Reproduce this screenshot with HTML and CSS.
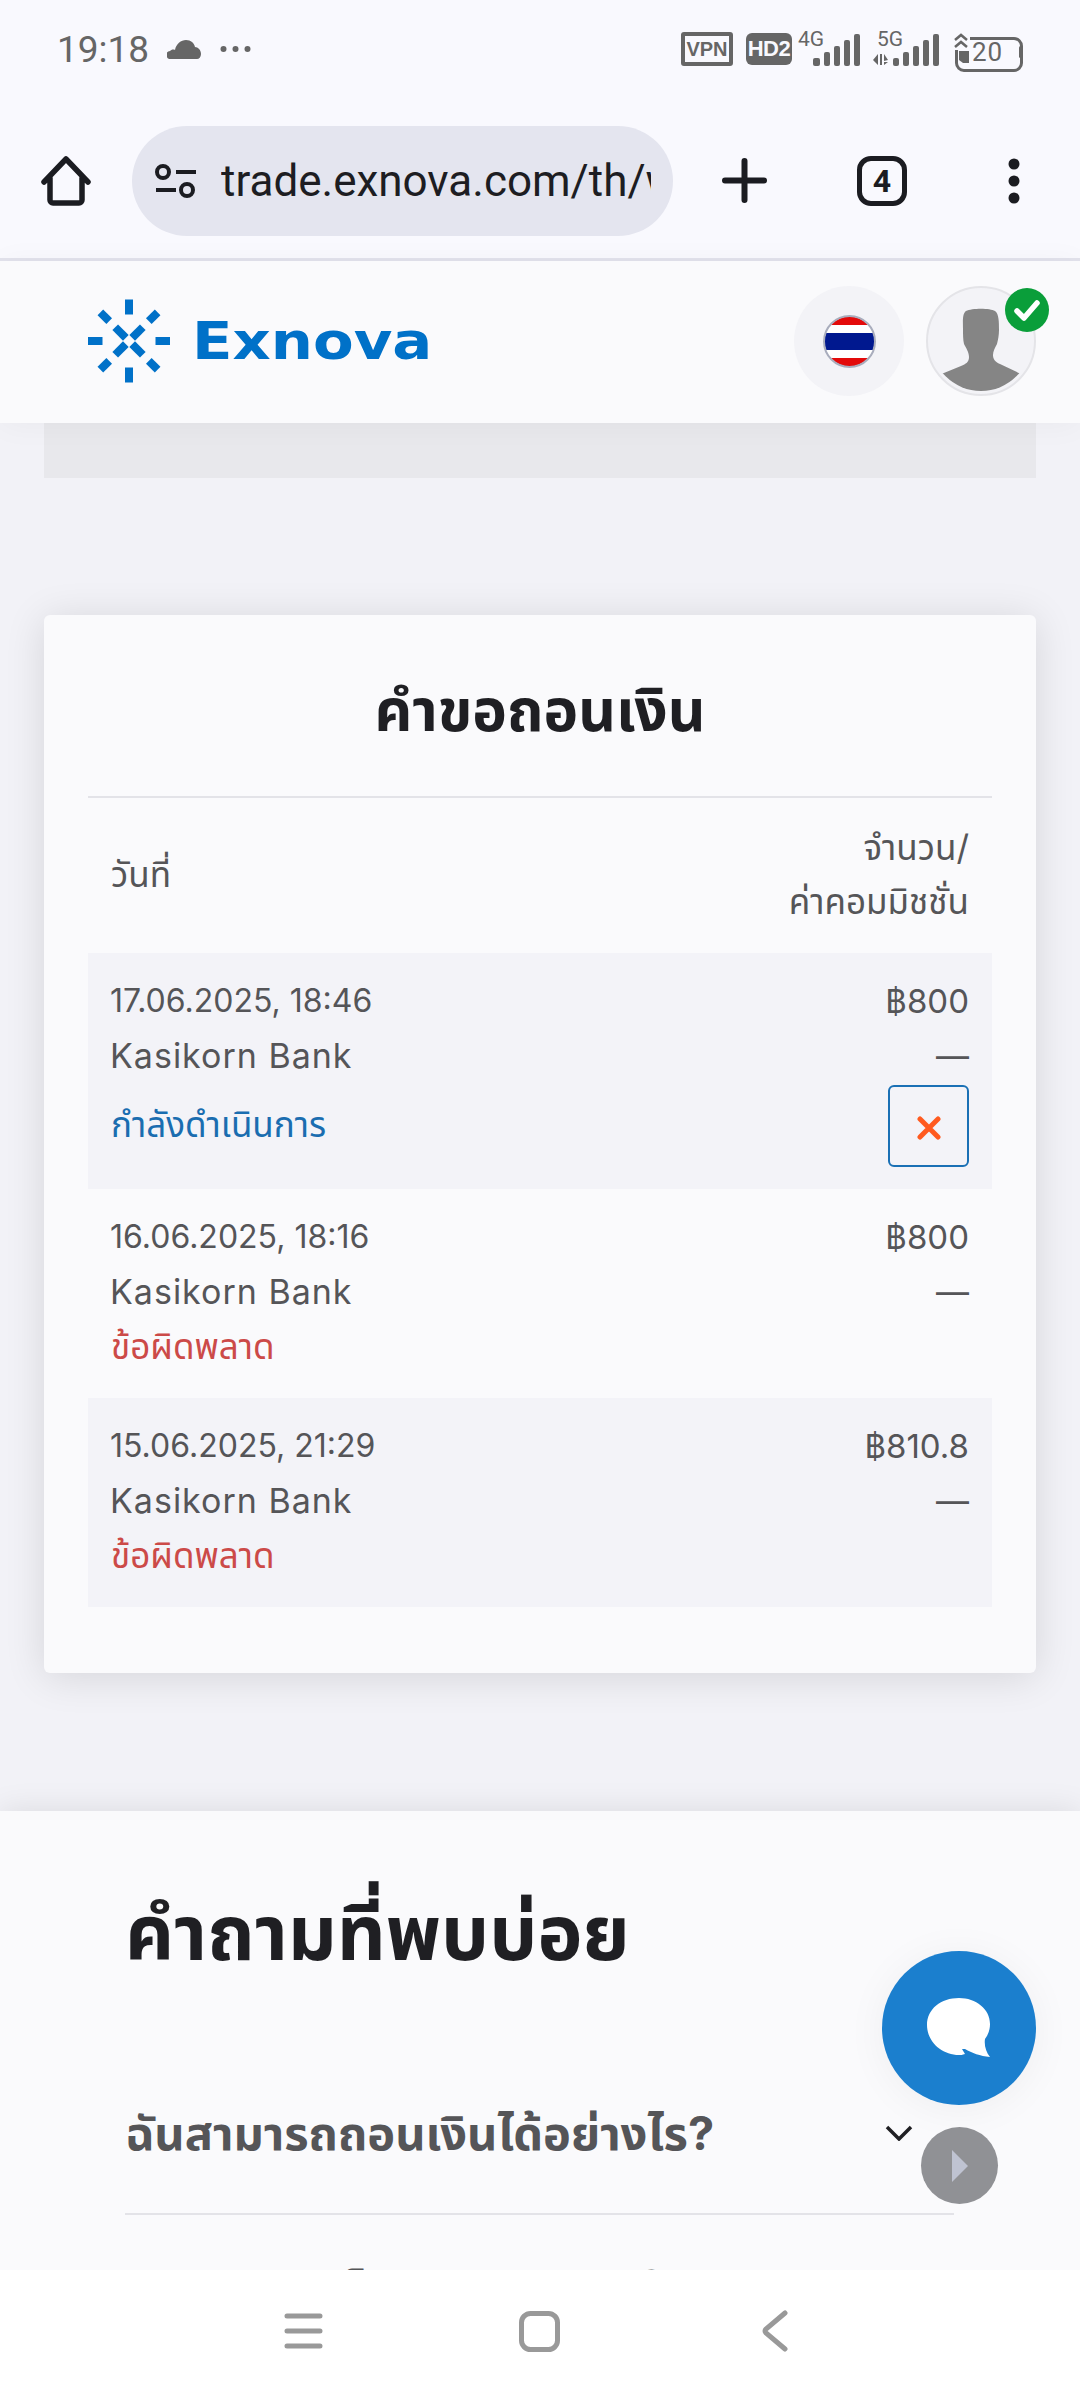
FILE: index.html
```html
<!DOCTYPE html>
<html lang="th">
<head>
    <meta charset="UTF-8">
    <meta name="viewport" content="width=device-width, initial-scale=1.0">
    <title>Exnova</title>
    <link rel="stylesheet" href="styles.css">
</head>
<body>
<div class="screen">
    <div class="status-bar">
        <span class="status-time">19:18</span>
        <svg class="status-cloud" width="34" height="19" viewBox="0 0 34 19"><path d="M4 19a4 4 0 0 1-1-8c1-1 3-2 5-1 1-6 6-10 11-10 5 0 8 3 9 7 3 0 6 3 6 7 0 3-2 5-4 5z" fill="#666"/></svg>
        <svg class="status-dots" width="31" height="8" viewBox="0 0 31 8"><circle cx="3.5" cy="4" r="3" fill="#666"/><circle cx="15.5" cy="4" r="3" fill="#666"/><circle cx="27.5" cy="4" r="3" fill="#666"/></svg>
        <div class="status-right">
            <span class="badge-vpn">VPN</span>
            <span class="badge-hd">HD2</span>
            <div class="signal signal-4g">
                <span class="signal-label">4G</span>
                <svg width="48" height="32" viewBox="0 0 48 32"><g fill="#666"><rect x="0" y="24" width="7" height="8" rx="2"/><rect x="11" y="18" width="6" height="14" rx="2"/><rect x="21" y="12" width="6" height="20" rx="2"/><rect x="31" y="6" width="6" height="26" rx="2"/><rect x="41" y="0" width="6" height="32" rx="2"/></g></svg>
            </div>
            <div class="signal signal-5g">
                <span class="signal-label">5G</span>
                <svg width="67" height="32" viewBox="0 0 67 32"><g fill="#666"><path d="M0 26l5-6v11zM7 20h2v11H7zM11 20l4 6-4 1zM11 28h4l-4 3z"/><rect x="20" y="24" width="6" height="8" rx="2"/><rect x="30" y="18" width="6" height="14" rx="2"/><rect x="40" y="12" width="6" height="20" rx="2"/><rect x="50" y="6" width="6" height="26" rx="2"/><rect x="60" y="0" width="6" height="32" rx="2"/></g></svg>
            </div>
            <div class="battery">
                <svg class="battery-charge" width="16" height="33" viewBox="0 0 16 33"><rect x="0" y="0" width="16" height="17" fill="#f9f9fe"/><path d="M1 7l6-5 6 5M1 14l6-5 6 5" fill="none" stroke="#666" stroke-width="2.500"/><path d="M5 18h10v12H9l-4-3z" fill="#666"/></svg>
                <span class="battery-level">20</span>
                <span class="battery-tip"></span>
            </div>
        </div>
    </div>

    <div class="toolbar">
        <svg class="tool-home" width="50" height="50" viewBox="0 0 50 50"><path d="M3 26L25 3l22 23M9 22v22a3 3 0 0 0 3 3h26a3 3 0 0 0 3-3V22" fill="none" stroke="#1b1c21" stroke-width="5.5" stroke-linecap="round" stroke-linejoin="round"/></svg>
        <div class="address-bar">
            <svg class="site-info" width="42" height="34" viewBox="0 0 42 34"><g fill="none" stroke="#1b1c21" stroke-width="4"><circle cx="8" cy="8" r="6"/><circle cx="32" cy="26" r="6"/></g><rect x="21" y="6" width="20" height="4" fill="#1b1c21"/><rect x="1" y="24" width="20" height="4" fill="#1b1c21"/></svg>
            <span class="address-url">trade.exnova.com/th/withdrawal</span>
        </div>
        <svg class="tool-plus" width="45" height="45" viewBox="0 0 45 45"><path d="M22.5 3v39M3 22.500h39" stroke="#1b1c21" stroke-width="6" stroke-linecap="round"/></svg>
        <div class="tool-tabs">4</div>
        <svg class="tool-menu" width="12" height="46" viewBox="0 0 12 46"><circle cx="6" cy="6" r="5.500" fill="#1b1c21"/><circle cx="6" cy="23" r="5.500" fill="#1b1c21"/><circle cx="6" cy="40" r="5.500" fill="#1b1c21"/></svg>
    </div>

    <header class="site-header">
        <svg class="logo-mark" width="82" height="84" viewBox="-41 -42 82 84">
            <g fill="#0071c8">
                <rect x="-4" y="-41.500" width="8" height="15"/>
                <rect x="-4" y="-41.500" width="8" height="15" transform="rotate(90)"/>
                <rect x="-4" y="-41.500" width="8" height="15" transform="rotate(180)"/>
                <rect x="-4" y="-41.500" width="8" height="15" transform="rotate(270)"/>
                <rect x="-4" y="-40.500" width="8" height="12.500" transform="rotate(45)"/>
                <rect x="-4" y="-40.500" width="8" height="12.500" transform="rotate(135)"/>
                <rect x="-4" y="-40.500" width="8" height="12.500" transform="rotate(225)"/>
                <rect x="-4" y="-40.500" width="8" height="12.500" transform="rotate(315)"/>
                <rect x="-4" y="-19.500" width="8" height="15" transform="rotate(45)"/>
                <rect x="-4" y="-19.500" width="8" height="15" transform="rotate(135)"/>
                <rect x="-4" y="-19.500" width="8" height="15" transform="rotate(225)"/>
                <rect x="-4" y="-19.500" width="8" height="15" transform="rotate(315)"/>
            </g>
        </svg>
        <span class="logo-text">Exnova</span>
        <div class="header-actions">
            <button class="lang-btn">
                <svg width="53" height="53" viewBox="0 0 53 53">
                    <defs><clipPath id="flagClip"><circle cx="26.500" cy="26.500" r="25"/></clipPath></defs>
                    <g clip-path="url(#flagClip)">
                        <rect width="53" height="53" fill="#fff"/>
                        <rect width="53" height="10" fill="#e30a0a"/>
                        <rect y="18" width="53" height="17" fill="#00188f"/>
                        <rect y="43" width="53" height="10" fill="#e30a0a"/>
                    </g>
                    <circle cx="26.500" cy="26.500" r="25.500" fill="none" stroke="#a9adbd" stroke-width="2"/>
                </svg>
            </button>
            <div class="avatar">
                <svg width="102" height="102" viewBox="0 0 102 102">
                    <defs><clipPath id="avatarClip"><circle cx="51" cy="51" r="50"/></clipPath></defs>
                    <path clip-path="url(#avatarClip)" d="M36 21C42 18 60 18 65 21C69 24 69 32 69 40C69 45 68 50 67 54C65 58 63 61 63 65C63 69 65 72 70 74L93 85V102H9V85L31 76C36 74 39 72 39 67C39 62 36 58 34 54C33 50 33 44 33 40C33 32 32 24 36 21Z" fill="#858585"/>
                </svg>
                <span class="avatar-badge">
                    <svg width="26" height="22" viewBox="0 0 26 22"><path d="M3 12l7 7L23 4" fill="none" stroke="#fff" stroke-width="5.500" stroke-linecap="round" stroke-linejoin="round"/></svg>
                </span>
            </div>
        </div>
    </header>

    <main class="page">
        <div class="strip"></div>

        <section class="card">
            <h2 class="card-title">คำขอถอนเงิน</h2>
            <div class="table-head">
                <span>วันที่</span>
                <span class="table-head-right">จำนวน/<br>ค่าคอมมิชชั่น</span>
            </div>

            <div class="row row-shaded">
                <span class="cell-date">17.06.2025, 18:46</span><span class="cell-amount">฿800</span>
                <span class="cell-bank">Kasikorn Bank</span><span class="cell-amount">—</span>
                <span class="state-pending">กำลังดำเนินการ</span>
                <span class="cell-action">
                    <button class="cancel-btn">
                        <svg width="24" height="24" viewBox="0 0 24 24"><path d="M3 3l18 18M21 3L3 21" stroke="#ff5a1f" stroke-width="5" stroke-linecap="round"/></svg>
                    </button>
                </span>
            </div>
            <div class="row">
                <span class="cell-date">16.06.2025, 18:16</span><span class="cell-amount">฿800</span>
                <span class="cell-bank">Kasikorn Bank</span><span class="cell-amount">—</span>
                <span class="state-error">ข้อผิดพลาด</span>
            </div>
            <div class="row row-shaded">
                <span class="cell-date">15.06.2025, 21:29</span><span class="cell-amount">฿810.8</span>
                <span class="cell-bank">Kasikorn Bank</span><span class="cell-amount">—</span>
                <span class="state-error">ข้อผิดพลาด</span>
            </div>
        </section>

        <section class="faq">
            <h2 class="faq-title">คำถามที่พบบ่อย</h2>
            <div class="faq-item">
                <span class="faq-question">ฉันสามารถถอนเงินได้อย่างไร?</span>
                <svg class="faq-chevron" width="28" height="16" viewBox="0 0 28 16"><path d="M2 2l12 12L26 2" fill="none" stroke="#202024" stroke-width="3.500"/></svg>
            </div>
            <div class="faq-item">
                <span class="faq-question">สถานะการเช็คยอดถอนเงินในบัญชี?</span>
            </div>
        </section>
    </main>

    <nav class="nav-bar">
        <svg width="39" height="36" viewBox="0 0 39 36"><path d="M3 3h33M3 18h33M3 33h33" stroke="#999" stroke-width="5" stroke-linecap="round"/></svg>
        <svg class="nav-home" width="41" height="41" viewBox="0 0 41 41"><rect x="2.500" y="2.500" width="36" height="36" rx="9" fill="none" stroke="#999" stroke-width="5"/></svg>
        <svg class="nav-back" width="26" height="42" viewBox="0 0 26 42"><path d="M23 3L4 19a3 3 0 0 0 0 4l19 16" fill="none" stroke="#999" stroke-width="5" stroke-linecap="round"/></svg>
    </nav>

    <button class="chat-fab">
        <svg width="64" height="60" viewBox="0 0 64 60"><path d="M32 0c17 0 31 11 31 26 0 6-2 11-5 15-1 6 1 13 5 18-10-1-18-4-25-8l-3 0 3 5c-3 1-4 1-6 1C15 57 0 44 0 27 0 11 14 0 32 0z" fill="#fff"/></svg>
    </button>
    <button class="play-fab">
        <svg width="16" height="32" viewBox="0 0 16 32"><path d="M0 0l16 16L0 32z" fill="#bfc3d2"/></svg>
    </button>
</div>
</body>
</html>
```

FILE: styles.css
```css
:root {
    --page-bg: #f2f2f7;
    --panel-bg: #fafafc;
    --bar-bg: #f9f9fe;
    --text-color: #555558;
    --dark-color: #1f1f23;
    --line-color: #e3e3e8;
    --shaded-row: #f3f3f8;
    --font-family: Inter, "Noto Sans", "Noto Sans Thai", sans-serif;
}

* {
    box-sizing: border-box;
}

html, body {
    margin: 0;
    height: 100%;
}

body {
    font-family: var(--font-family);
    color: var(--text-color);
    background: var(--page-bg);
}

button {
    border: none;
    padding: 0;
    font: inherit;
}

.screen {
    position: relative;
    display: flex;
    flex-direction: column;
    width: 1080px;
    height: 2400px;
    overflow: hidden;
}

/* Status bar */
.status-bar {
    display: flex;
    align-items: center;
    height: 102px;
    padding: 0 58px 4px 57px;
    background: var(--bar-bg);
    color: #666;
}

.status-time {
    font-family: Roboto, sans-serif;
    font-size: 37px;
}

.status-cloud {
    margin-left: 18px;
}

.status-dots {
    margin-left: 19px;
}

.status-right {
    display: flex;
    align-items: center;
    margin-left: auto;
}

.badge-vpn,
.badge-hd {
    display: flex;
    align-items: center;
    justify-content: center;
    font-family: "Liberation Sans", sans-serif;
    font-weight: 700;
}

.badge-vpn {
    width: 52px;
    height: 34px;
    border: 4px solid #666;
    border-radius: 3px;
    font-size: 20px;
}

.badge-hd {
    width: 46px;
    height: 32px;
    margin-left: 13px;
    border-radius: 6px;
    background: #666;
    color: #f9f9fe;
    font-size: 22px;
    letter-spacing: -0.5px;
}

.signal {
    position: relative;
    display: flex;
    height: 34px;
    align-items: flex-end;
}

.signal-4g {
    width: 63px;
    margin-left: 6px;
    justify-content: flex-end;
}

.signal-5g {
    width: 67px;
    margin-left: 12px;
}

.signal-label {
    position: absolute;
    top: -4px;
    left: 0;
    font-family: Roboto, sans-serif;
    font-size: 21px;
    line-height: 22px;
}

.signal-5g .signal-label {
    left: 4px;
}

.battery {
    position: relative;
    display: flex;
    align-items: center;
    width: 68px;
    height: 33px;
    margin-left: 14px;
}

.battery::before {
    content: "";
    position: absolute;
    top: 4px;
    left: 1px;
    width: 62px;
    height: 29px;
    border: 3px solid #666;
    border-radius: 9px;
}

.battery-charge {
    position: relative;
    flex-shrink: 0;
}

.battery-level {
    position: relative;
    margin: 5px 0 0 2px;
    font-family: Roboto, sans-serif;
    font-size: 26px;
    letter-spacing: 1px;
    line-height: 26px;
}

.battery-tip {
    position: absolute;
    top: 13px;
    right: 0;
    width: 3px;
    height: 12px;
    border-radius: 2px;
    background: #666;
}

/* Browser toolbar */
.toolbar {
    display: flex;
    align-items: center;
    height: 159px;
    padding: 1px 0 0 41px;
    background: var(--bar-bg);
    border-bottom: 3px solid #e2e2ec;
}

.address-bar {
    display: flex;
    align-items: center;
    width: 541px;
    height: 110px;
    margin-left: 41px;
    padding: 0 22px 0 23px;
    border-radius: 55px;
    background: #e4e5ef;
}

.site-info {
    flex-shrink: 0;
}

.address-url {
    flex: 1;
    min-width: 0;
    margin-left: 24px;
    overflow: hidden;
    white-space: nowrap;
    font-family: Roboto, sans-serif;
    font-size: 44px;
    color: #1d1d22;
}

.tool-plus {
    margin-left: 49px;
}

.tool-tabs {
    display: flex;
    align-items: center;
    justify-content: center;
    width: 50px;
    height: 50px;
    margin-left: 90px;
    border: 5px solid #1b1c21;
    border-radius: 14px;
    font-family: Roboto, sans-serif;
    font-size: 32px;
    font-weight: 700;
    color: #1b1c21;
}

.tool-menu {
    margin-left: 101px;
}

/* Site header */
.site-header {
    position: relative;
    z-index: 2;
    display: flex;
    align-items: center;
    height: 162px;
    padding: 0 44px 2px 88px;
    background: var(--panel-bg);
    box-shadow: 0 2px 30px rgba(0, 0, 0, 0.04);
}

.logo-text {
    margin-left: 22px;
    font-family: "DejaVu Sans", sans-serif;
    font-size: 52px;
    font-weight: 700;
    color: #0071c8;
    transform: scaleX(1.14);
    transform-origin: left center;
}

.header-actions {
    display: flex;
    align-items: center;
    gap: 22px;
    margin-left: auto;
}

.lang-btn {
    display: flex;
    align-items: center;
    justify-content: center;
    width: 110px;
    height: 110px;
    border-radius: 50%;
    background: #f3f3f7;
}

.avatar {
    position: relative;
    width: 110px;
    height: 110px;
    padding: 2px;
    border: 2px solid #e4e4e8;
    border-radius: 50%;
    background: #f3f3f7;
}

.avatar-badge {
    position: absolute;
    top: 0;
    right: -15px;
    display: flex;
    align-items: center;
    justify-content: center;
    width: 44px;
    height: 44px;
    border-radius: 50%;
    background: #0a9e3a;
}

/* Page content */
.page {
    flex: 1;
    min-height: 0;
    overflow: hidden;
}

.strip {
    height: 55px;
    margin: 0 44px;
    background: #e8e8ec;
}

.card {
    margin: 137px 44px 138px;
    padding: 0 44px 66px;
    border-radius: 6px;
    background: var(--panel-bg);
    box-shadow: 0 4px 40px rgba(0, 0, 0, 0.12);
}

.card-title {
    height: 183px;
    margin: 0;
    border-bottom: 2px solid var(--line-color);
    font-size: 58.500px;
    font-weight: 700;
    line-height: 190px;
    text-align: center;
    color: var(--dark-color);
}

.table-head {
    display: flex;
    align-items: center;
    justify-content: space-between;
    height: 155px;
    padding: 0 23px 3px;
    font-size: 35px;
    line-height: 54px;
}

.table-head-right {
    text-align: right;
}

.row {
    display: grid;
    grid-template-columns: 1fr auto;
    align-items: center;
    padding: 22px 23px;
    font-size: 35px;
    line-height: 52px;
}

.row-shaded {
    background: var(--shaded-row);
}

.row > span {
    padding-bottom: 3px;
}

.cell-date {
    margin-left: -1px;
    font-size: 32px;
}

.cell-bank {
    margin-left: -1px;
    font-size: 34px;
    letter-spacing: 1px;
}

.cell-amount {
    font-size: 33px;
    text-align: right;
}

.row > .cell-action {
    display: flex;
    justify-content: flex-end;
    padding-bottom: 0;
}

.row > .state-pending,
.row > .state-error {
    padding-bottom: 5px;
    line-height: 50px;
}

.state-pending {
    color: #1a6db0;
}

.state-error {
    color: #cc4a48;
}

.cancel-btn {
    display: flex;
    align-items: center;
    justify-content: center;
    width: 81px;
    height: 82px;
    padding-top: 3px;
    border: 2px solid #1a70b5;
    border-radius: 6px;
    background: transparent;
}

/* FAQ */
.faq {
    height: 600px;
    padding: 71px 0 0 125px;
    background: var(--panel-bg);
    box-shadow: 0 0 30px rgba(0, 0, 0, 0.1);
}

.faq-title {
    margin: 0 0 77px;
    font-size: 76px;
    font-weight: 700;
    line-height: 100px;
    color: var(--dark-color);
}

.faq-item {
    display: flex;
    align-items: center;
    justify-content: space-between;
    width: 829px;
    height: 156px;
    padding: 0 41px 6px 0;
    border-bottom: 2px solid var(--line-color);
}

.faq-item + .faq-item {
    padding-top: 6px;
}

.faq-question {
    padding-top: 5px;
    font-size: 47px;
    font-weight: 700;
}

/* Bottom navigation */
.nav-bar {
    position: relative;
    z-index: 2;
    display: flex;
    align-items: center;
    height: 130px;
    padding: 0 0 8px 284px;
    background: #fff;
}

.nav-home {
    margin-left: 196px;
}

.nav-back {
    margin-left: 202px;
}

/* Floating buttons */
.chat-fab {
    position: absolute;
    top: 1951px;
    right: 44px;
    display: flex;
    align-items: center;
    justify-content: center;
    width: 154px;
    height: 154px;
    border-radius: 50%;
    background: #1b7fce;
    box-shadow: 0 4px 40px rgba(0, 0, 0, 0.05);
}

.play-fab {
    position: absolute;
    top: 2127px;
    right: 82px;
    display: flex;
    align-items: center;
    justify-content: center;
    width: 77px;
    height: 77px;
    border-radius: 50%;
    background: #909195;
}
```
